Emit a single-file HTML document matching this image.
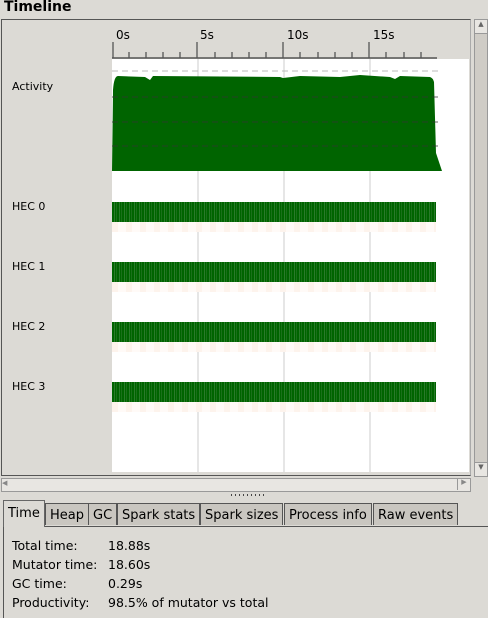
<!DOCTYPE html><html><head><style>
body{margin:0;width:488px;height:617px;background:#dcdad5;font-family:"DejaVu Sans","Liberation Sans",sans-serif;font-size:12px;color:#000;position:relative;overflow:hidden}
.a{position:absolute}
.bar{position:absolute;left:112px;width:324px;height:20px;background:repeating-linear-gradient(90deg,#006400 0 2px,#2a7a2a 2px 3px,#006400 3px 4px,#1a701a 4px 5px)}
.sh{position:absolute;left:112px;width:324px;height:10px;background:repeating-linear-gradient(90deg,#fdf3ec 0 6px,#fffaf7 6px 14px)}
.tab{position:absolute;top:503px;height:21px;border:1px solid #555;border-bottom:none;background:#c9c6c0;line-height:23px;padding:0 4px;font-size:13px}
</style></head><body>
<div class="a" style="left:4px;top:-1px;font-weight:bold;font-size:14px">Timeline</div>
<div class="a" style="left:1px;top:19px;width:468px;height:455px;border:1px solid #555;border-right:1px solid #aaa;background:#dcdad5"></div>
<div class="a" style="left:112px;top:59px;width:357px;height:413px;background:#fff"></div>
<div class="a" style="left:197px;top:59px;width:2px;height:413px;background:#e6e6e6"></div>
<div class="a" style="left:283px;top:59px;width:2px;height:413px;background:#e6e6e6"></div>
<div class="a" style="left:369px;top:59px;width:2px;height:413px;background:#e6e6e6"></div>
<svg class="a" style="left:0;top:0" width="470" height="180">
<line x1="112" y1="58" x2="437" y2="58" stroke="#555" stroke-width="1.5"/>
<g stroke="#555" stroke-width="1.3">
<line x1="113" y1="42" x2="113" y2="58"/><line x1="197" y1="42" x2="197" y2="58"/><line x1="283" y1="42" x2="283" y2="58"/><line x1="369" y1="42" x2="369" y2="58"/>
<line x1="129" y1="52" x2="129" y2="58"/><line x1="146" y1="52" x2="146" y2="58"/><line x1="163" y1="52" x2="163" y2="58"/><line x1="180" y1="52" x2="180" y2="58"/>
<line x1="215" y1="52" x2="215" y2="58"/><line x1="232" y1="52" x2="232" y2="58"/><line x1="249" y1="52" x2="249" y2="58"/><line x1="266" y1="52" x2="266" y2="58"/>
<line x1="300" y1="52" x2="300" y2="58"/><line x1="318" y1="52" x2="318" y2="58"/><line x1="335" y1="52" x2="335" y2="58"/><line x1="352" y1="52" x2="352" y2="58"/>
<line x1="386" y1="52" x2="386" y2="58"/><line x1="404" y1="52" x2="404" y2="58"/><line x1="421" y1="52" x2="421" y2="58"/></g>
<g font-size="12" fill="#000"><text x="116" y="39">0s</text><text x="200" y="39">5s</text><text x="287" y="39">10s</text><text x="373" y="39">15s</text></g>
<path d="M112 171 L113 90 Q114 76 118 76 L145 77 L150 80 L153 76 L280 77 L283 78 L300 76 L340 77 L360 75 L390 77 L395 79 L400 76 L430 77 Q433 78 434 82 L436 153 L442 171 Z" fill="#006400"/>
<g stroke="#333" stroke-dasharray="6,4" stroke-width="0.7"><line x1="112" y1="97" x2="440" y2="97"/><line x1="112" y1="122" x2="440" y2="122"/><line x1="112" y1="146" x2="440" y2="146"/></g>
<line x1="112" y1="71" x2="440" y2="71" stroke="#bbb" stroke-dasharray="6,4"/>
</svg>
<div class="a" style="left:12px;top:80px;font-size:11px">Activity</div>
<div class="a" style="left:12px;top:200px;font-size:11px">HEC 0</div>
<div class="a" style="left:12px;top:260px;font-size:11px">HEC 1</div>
<div class="a" style="left:12px;top:320px;font-size:11px">HEC 2</div>
<div class="a" style="left:12px;top:380px;font-size:11px">HEC 3</div>
<div class="bar" style="top:202px"></div><div class="sh" style="top:222px"></div>
<div class="bar" style="top:262px"></div><div class="sh" style="top:282px"></div>
<div class="bar" style="top:322px"></div><div class="sh" style="top:342px"></div>
<div class="bar" style="top:382px"></div><div class="sh" style="top:402px"></div>
<div class="a" style="left:474px;top:19px;width:12px;height:456px;border:1px solid #999;background:#cfccc6"></div>
<div class="a" style="left:474px;top:19px;width:12px;height:13px;border:1px solid #999;background:#e8e6e2;font-size:7px;text-align:center;color:#666">▲</div>
<div class="a" style="left:474px;top:462px;width:12px;height:13px;border:1px solid #999;background:#e8e6e2;font-size:7px;text-align:center;color:#666">▼</div>
<div class="a" style="left:1px;top:478px;width:468px;height:12px;border:1px solid #999;background:#e8e6e2"></div>
<div class="a" style="left:2px;top:479px;width:11px;height:12px;font-size:7px;color:#888">◀</div>
<div class="a" style="left:457px;top:478px;width:12px;height:12px;border-left:1px solid #999;font-size:7px;color:#888;text-align:center">▶</div>
<div class="a" style="left:231px;top:494px;width:33px;height:2px;background:repeating-linear-gradient(90deg,#444 0 1px,transparent 1px 4px)"></div>
<div class="a" style="left:3px;top:526px;width:485px;height:91px;border:1px solid #555;border-right:none;border-bottom:none"></div>
<div class="tab" style="left:3px;top:500px;height:26px;line-height:25px;background:#dcdad5;border-color:#666">Time</div>
<div class="tab" style="left:45px">Heap</div>
<div class="tab" style="left:88px">GC</div>
<div class="tab" style="left:117px">Spark stats</div>
<div class="tab" style="left:200px">Spark sizes</div>
<div class="tab" style="left:284px">Process info</div>
<div class="tab" style="left:373px">Raw events</div>
<div class="a" style="left:12px;top:536px;line-height:19px;font-size:12.5px">Total time:<br>Mutator time:<br>GC time:<br>Productivity:</div>
<div class="a" style="left:108px;top:536px;line-height:19px;font-size:12.5px">18.88s<br>18.60s<br>0.29s<br>98.5% of mutator vs total</div>
</body></html>
